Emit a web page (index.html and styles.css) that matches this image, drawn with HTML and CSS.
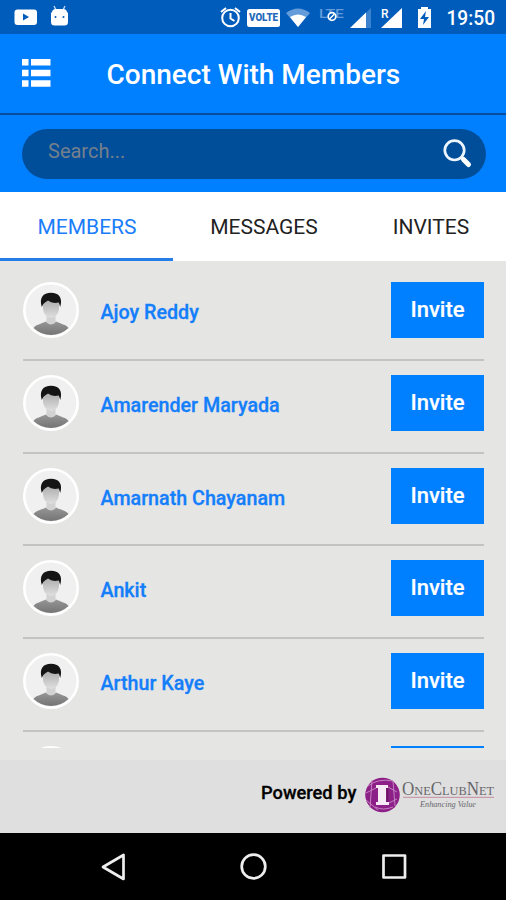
FILE: index.html
```html
<!DOCTYPE html>
<html lang="en">
<head>
<meta charset="utf-8">
<title>Connect With Members</title>
<link rel="stylesheet" href="styles.css">
</head>
<body>
<svg width="0" height="0" class="defs">
  <defs>
    <linearGradient id="face" x1="0" y1="0" x2="0" y2="1"><stop offset="0" stop-color="#a8a8a8"/><stop offset="1" stop-color="#e0e0e0"/></linearGradient>
    <linearGradient id="shirt" x1="0" y1="0" x2="0" y2="1"><stop offset="0" stop-color="#969696"/><stop offset="1" stop-color="#747474"/></linearGradient>
  </defs>
  <symbol id="avatar" viewBox="0 0 56 56">
    <circle cx="28" cy="28" r="26.7" fill="#f0f0f0" stroke="#fff" stroke-width="2.6"/>
    <path d="M10.500 46C13 42.500 18 42 23 39.500Q28 43 33 39.500C38 42 43 42.500 45.500 46Q38 53 28 53T10.500 46Z" fill="url(#shirt)"/>
    <path d="M23.500 32h9v8.500q-4.500 4-9 0z" fill="#d2d2d2"/>
    <path d="M20 19q8-5 16 0v8q-1 8-8 9-7-1-8-9z" fill="url(#face)"/>
    <path d="M18.800 25C16 16 20 10.800 28 10.800S40 16 37.200 25L35.800 20.500Q29 22 25 18.500Q22 20 20.300 22Z" fill="#151515"/>
  </symbol>
</svg>
<div class="screen">
  <div class="status">
    <svg width="506" height="34" viewBox="0 0 506 34" fill="#fff">
      <rect x="14.500" y="9.500" width="22.500" height="15.500" rx="3"/><path d="M23 13.500v7l6-3.500z" fill="#005cbb"/>
      <path d="M54 6l2 4M65 6l-2 4" stroke="#c9ddf5" stroke-width="1.300"/>
      <path d="M52 12.500q0-3.500 4-3.500h7q4 0 4 3.500zM51 12.500h17v9.500q0 3.500-3.500 3.500h-10q-3.500 0-3.500-3.500z"/>
      <circle cx="55.500" cy="17" r="1" fill="#005cbb"/><circle cx="63.500" cy="17" r="1" fill="#005cbb"/>
      <g fill="none" stroke="#fff" stroke-width="2"><circle cx="230.500" cy="18" r="8.300"/><path d="M230.500 13v5.500l4 2.500M221 12l5-4M240 12l-5-4"/></g>
      <rect x="247" y="9" width="33" height="18" rx="2.500"/>
      <text x="249" y="21" class="volte" textLength="29" lengthAdjust="spacingAndGlyphs">VOLTE</text>
      <path d="M286 13q12-9 24 0L298 27z" fill="#649cdb"/><path d="M290 17q8-5 16 0L298 27z"/>
      <text x="319" y="18" class="lte" textLength="25" lengthAdjust="spacingAndGlyphs">LTE</text>
      <circle cx="332" cy="16.500" r="3.800" fill="#005cbb" stroke="#fff" stroke-width="1.700"/><path d="M329.500 19l5-5" stroke="#fff" stroke-width="1.500"/>
      <path d="M371 8v20H350z" fill="#3b82cf"/><path d="M366 12.500v15.500H350z"/>
      <path d="M402 8v20H381z"/><text x="381" y="18" class="roam">R</text>
      <path d="M421 7h7v2h3v19h-13V9h3z"/><path d="M426 11l-6 8h4l-1 6 6-8h-4z" fill="#005cbb"/>
      <text x="446.500" y="25" class="clock" textLength="48.500" lengthAdjust="spacingAndGlyphs">19:50</text>
    </svg>
  </div>
  <header class="header">
    <svg class="menu" width="29" height="29" viewBox="0 0 29 29" fill="#fff"><path d="M0 0h6.500v6.500H0zM9 0h19.500v6.500H9zM0 10.800h6.500v6.500H0zM9 10.800h19.500v6.500H9zM0 21.300h6.500v6.500H0zM9 21.300h19.500v6.500H9z"/></svg>
    <h1 class="title">Connect With Members</h1>
  </header>
  <div class="search-area">
    <div class="search">
      <span class="placeholder">Search...</span>
      <svg width="31" height="31" viewBox="0 0 31 31" fill="none" stroke="#eef5ff"><circle cx="12.500" cy="12.300" r="9.700" stroke-width="2.700"/><path d="M19 19l2 2" stroke-width="2.500"/><path d="M21.500 21.500l5 5" stroke="#fff" stroke-width="5" stroke-linecap="round"/></svg>
    </div>
  </div>
  <nav class="tabs">
    <div class="tab active"><span>MEMBERS</span></div>
    <div class="tab"><span>MESSAGES</span></div>
    <div class="tab"><span>INVITES</span></div>
  </nav>
  <main class="list">
    <div class="row"><svg class="avatar"><use href="#avatar"/></svg><span class="name">Ajoy Reddy</span><div class="invite">Invite</div></div>
    <div class="row"><svg class="avatar"><use href="#avatar"/></svg><span class="name">Amarender Maryada</span><div class="invite">Invite</div></div>
    <div class="row"><svg class="avatar"><use href="#avatar"/></svg><span class="name">Amarnath Chayanam</span><div class="invite">Invite</div></div>
    <div class="row"><svg class="avatar"><use href="#avatar"/></svg><span class="name">Ankit</span><div class="invite">Invite</div></div>
    <div class="row"><svg class="avatar"><use href="#avatar"/></svg><span class="name">Arthur Kaye</span><div class="invite">Invite</div></div>
    <div class="row"><svg class="avatar"><use href="#avatar"/></svg><div class="invite"></div></div>
  </main>
  <footer class="footer">
    <span class="powered">Powered by</span>
    <svg width="132" height="40" viewBox="0 0 132 40">
      <circle cx="18.500" cy="20" r="17.300" fill="#8d2088"/>
      <g fill="none" stroke="#c98bc5" stroke-width=".9"><path d="M4 11q10-8 25-5M2 25q6 5 12 10M8 5l-2 28M29 6l2 25M2 18l10-5M24 12l9 5M25 28l8-4M11 32q8 4 18 0"/></g>
      <path d="M12 10h12v3h-2v14h3v3H12v-3h2V13h-2z" fill="#f5eaf5"/>
      <path d="M23.500 13v14" stroke="#6d1468" stroke-width="2"/>
      <text x="38" y="19.500" class="brand" textLength="92" lengthAdjust="spacingAndGlyphs"><tspan class="cap">O</tspan>NE<tspan class="cap">C</tspan>LUB<tspan class="cap">N</tspan>ET</text>
      <path d="M39 22.300h91" stroke="#c48a9e" stroke-width="1"/>
      <text x="56" y="32" class="tagline" textLength="56" lengthAdjust="spacingAndGlyphs">Enhancing Value</text>
    </svg>
  </footer>
  <div class="navbar">
    <svg width="506" height="66" viewBox="0 0 506 66" fill="none" stroke="#eee" stroke-width="2.700" stroke-linejoin="round"><path d="M123.500 22v24L103 34z"/><circle cx="253.500" cy="33.500" r="11.800"/><rect x="383.500" y="22.500" width="21.500" height="22"/></svg>
  </div>
</div>
</body>
</html>
```
FILE: styles.css
```css
* { box-sizing: border-box; }
body { margin: 0; font-family: Roboto, "Liberation Sans", sans-serif; }
svg { display: block; flex: none; }
.defs { position: absolute; }
.screen { width: 506px; height: 900px; display: flex; flex-direction: column; background: #e5e5e3; overflow: hidden; }
.status { height: 34px; background: #005cbb; flex: none; }
.volte { font-size: 10px; font-weight: 900; fill: #2269bb; }
.lte { font-size: 13px; font-weight: 500; fill: #649cdb; }
.roam { font-size: 12px; font-weight: 500; }
.clock { font-size: 20px; font-weight: 500; }
.header { height: 81px; flex: none; display: flex; align-items: center; background: #007fff; border-bottom: 2px solid #084d9e; padding-left: 21.5px; }
.title { margin: 2px 0 0 56px; font-size: 28px; font-weight: 500; line-height: 34px; color: #fff; white-space: nowrap; }
.search-area { height: 77px; flex: none; background: #007fff; padding: 13.5px 20.5px 0 21.5px; }
.search { height: 50.5px; border-radius: 26px; background: #004e99; display: flex; align-items: center; justify-content: space-between; padding: 0 13px 0 26.5px; }
.placeholder { color: #75808c; font-size: 20px; line-height: 24px; padding-bottom: 5px; }
.tabs { height: 69px; flex: none; background: #fff; display: flex; font-size: 21px; color: #222; }
.tab { width: 173px; flex: none; border-bottom: 3px solid transparent; display: flex; align-items: center; justify-content: center; padding-top: 4px; }
.tab:last-child { width: 160px; padding-left: 10px; }
.tab:nth-child(2) { padding-left: 9px; }
.tab.active { color: #1b7dfa; border-color: #237ee8; padding-left: 1px; }
.list { height: 487px; flex: none; overflow: hidden; padding: 7px 22px 0 23px; }
.row { height: 92.8px; border-bottom: 2px solid #c3c3c2; display: flex; align-items: flex-start; padding-top: 14px; }
.avatar { width: 56px; height: 56px; }
.name { margin: 19px 0 0 21.5px; font-size: 19.7px; line-height: 24px; font-weight: 500; color: #147efb; -webkit-text-stroke: .3px #147efb; white-space: nowrap; }
.invite { width: 93px; height: 56px; margin-left: auto; background: #007fff; color: #fff; font-size: 22px; font-weight: 500; line-height: 55px; text-align: center; -webkit-text-stroke: .2px #fff; }
.footer { margin-top: 12px; height: 73px; flex: none; background: #dfdfdf; display: flex; align-items: center; padding: 0 10px 4px 261px; justify-content: space-between; }
.powered { font-size: 18.3px; font-weight: 500; color: #000; white-space: nowrap; -webkit-text-stroke: .3px #000; padding-bottom: 5px; }
.brand { font-family: "Liberation Serif", serif; font-size: 13px; fill: #66666a; }
.cap { font-size: 18px; }
.tagline { font-family: "Liberation Serif", serif; font-style: italic; font-size: 9px; fill: #68686c; }
.navbar { height: 67px; flex: none; background: #000; }
```
